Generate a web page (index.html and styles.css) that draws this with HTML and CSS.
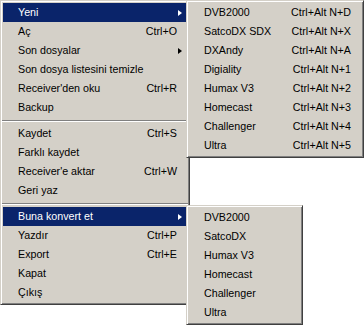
FILE: index.html
```html
<!DOCTYPE html>
<html>
<head>
	<meta charset="utf-8">
	<link rel="stylesheet" href="styles.css">
</head>
<body>
<div class="screen">
	<div class="menu main">
		<div class="item active"><span class="label">Yeni</span><span class="arrow"></span></div>
		<div class="item"><span class="label">Aç</span><span class="key">Ctrl+O</span></div>
		<div class="item"><span class="label">Son dosyalar</span><span class="arrow"></span></div>
		<div class="item"><span class="label">Son dosya listesini temizle</span></div>
		<div class="item"><span class="label">Receiver'den oku</span><span class="key">Ctrl+R</span></div>
		<div class="item"><span class="label">Backup</span></div>
		<div class="sep"></div>
		<div class="item"><span class="label">Kaydet</span><span class="key">Ctrl+S</span></div>
		<div class="item"><span class="label">Farklı kaydet</span></div>
		<div class="item"><span class="label">Receiver'e aktar</span><span class="key">Ctrl+W</span></div>
		<div class="item"><span class="label">Geri yaz</span></div>
		<div class="sep"></div>
		<div class="item active"><span class="label">Buna konvert et</span><span class="arrow"></span></div>
		<div class="item"><span class="label">Yazdır</span><span class="key">Ctrl+P</span></div>
		<div class="item"><span class="label">Export</span><span class="key">Ctrl+E</span></div>
		<div class="item"><span class="label">Kapat</span></div>
		<div class="item"><span class="label">Çıkış</span></div>
	</div>
	<div class="menu sub-new">
		<div class="item"><span class="label">DVB2000</span><span class="key">Ctrl+Alt N+D</span></div>
		<div class="item"><span class="label">SatcoDX SDX</span><span class="key">Ctrl+Alt N+X</span></div>
		<div class="item"><span class="label">DXAndy</span><span class="key">Ctrl+Alt N+A</span></div>
		<div class="item"><span class="label">Digiality</span><span class="key">Ctrl+Alt N+1</span></div>
		<div class="item"><span class="label">Humax V3</span><span class="key">Ctrl+Alt N+2</span></div>
		<div class="item"><span class="label">Homecast</span><span class="key">Ctrl+Alt N+3</span></div>
		<div class="item"><span class="label">Challenger</span><span class="key">Ctrl+Alt N+4</span></div>
		<div class="item"><span class="label">Ultra</span><span class="key">Ctrl+Alt N+5</span></div>
	</div>
	<div class="menu sub-convert">
		<div class="item"><span class="label">DVB2000</span></div>
		<div class="item"><span class="label">SatcoDX</span></div>
		<div class="item"><span class="label">Humax V3</span></div>
		<div class="item"><span class="label">Homecast</span></div>
		<div class="item"><span class="label">Challenger</span></div>
		<div class="item"><span class="label">Ultra</span></div>
	</div>
</div>
</body>
</html>
```
FILE: styles.css
```css
* {
	padding: 0;
	margin: 0;
	box-sizing: border-box;
}

body {
	background: #fff;
	font-family: "Liberation Sans", Arial, sans-serif;
	font-size: 10.7px;
	color: #000;
}

.screen {
	position: relative;
	width: 364px;
	height: 325px;
	overflow: hidden;
}

/* classic 3d menu box */
.menu {
	position: absolute;
	background: #d4d0c8;
	border: 1px solid;
	border-color: #d4d0c8 #404040 #404040 #d4d0c8;
	box-shadow: inset 1px 1px #fff, inset -1px -1px #808080;
	padding: 2px;
}

.main {
	left: 0;
	top: 0;
	width: 190px;
}

.sub-new {
	left: 186px;
	top: 0;
	width: 178px;
}

.sub-convert {
	left: 186px;
	top: 205px;
	width: 117px;
}

.item {
	display: flex;
	align-items: center;
	height: 19px;
	line-height: 19px;
	padding: 0 5px 0 15px;
	white-space: nowrap;
}

.item.active {
	background: #0a246a;
	color: #fff;
}

.label {
	flex: 1;
}

.key {
	margin-right: 5px;
}

.arrow {
	width: 0;
	height: 0;
	border-top: 3.5px solid transparent;
	border-bottom: 3.5px solid transparent;
	border-left: 4px solid #000;
}

.active .arrow {
	border-left-color: #fff;
}

.sep {
	height: 7px;
	margin: 0 -1px;
	padding-top: 3px;
}

.sep:after {
	content: "";
	display: block;
	height: 1px;
	background: #808080;
	border-bottom: 1px solid #fff;
	box-sizing: content-box;
}
```
